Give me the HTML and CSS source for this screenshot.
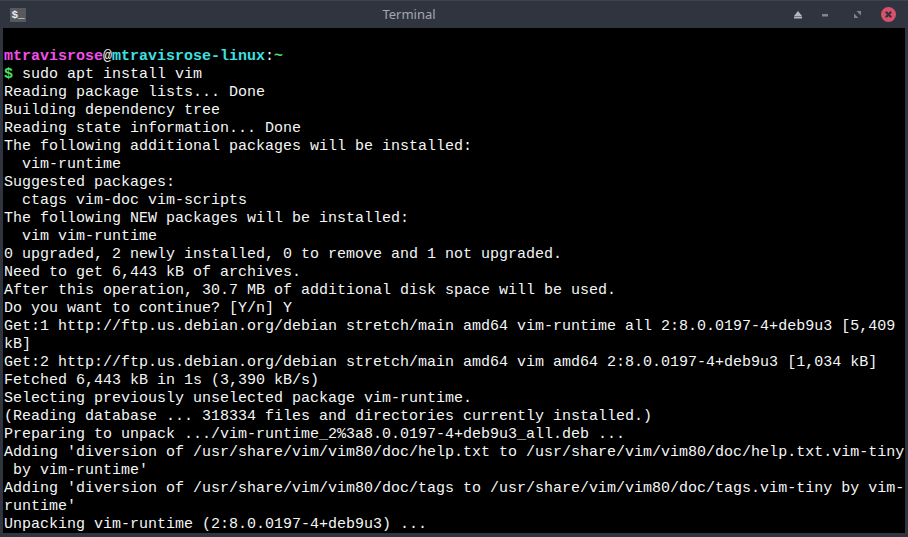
FILE: index.html
```html
<!DOCTYPE html>
<html lang="en">
<head>
<meta charset="utf-8">
<title>Terminal</title>
<link rel="stylesheet" href="styles.css">
</head>
<body>
<div class="window">
  <header class="titlebar">
    <div class="app-icon">$_</div>
    <div class="title">Terminal</div>
    <div class="controls">
      <svg class="ctl eject" width="8" height="8" viewBox="0 0 8 8"><path d="M4 0 8 5H0Z M0 5.500h8V7.500H0Z" fill="#b4b7bd"/></svg>
      <svg class="ctl minimize" width="6" height="3" viewBox="0 0 6 3"><path d="M0 0h6v2.500H0Z" fill="#80848e"/></svg>
      <svg class="ctl maximize" width="7" height="7" viewBox="0 0 7 7"><path d="M2.500 0H7V4.500Z M0 2.500V7H4.500Z" fill="#80848e"/></svg>
      <div class="close"><svg width="15" height="15" viewBox="0 0 15 15"><path d="M4.800 4.800l5.400 5.400M10.200 4.800l-5.400 5.400" stroke="#2f343f" stroke-width="2.200"/></svg></div>
    </div>
  </header>
  <pre class="term">

<span class="u">mtravisrose</span><span class="w">@</span><span class="h">mtravisrose-linux</span><span class="w">:</span><span class="g">~</span>
<span class="g">$</span> sudo apt install vim
Reading package lists... Done
Building dependency tree
Reading state information... Done
The following additional packages will be installed:
  vim-runtime
Suggested packages:
  ctags vim-doc vim-scripts
The following NEW packages will be installed:
  vim vim-runtime
0 upgraded, 2 newly installed, 0 to remove and 1 not upgraded.
Need to get 6,443 kB of archives.
After this operation, 30.7 MB of additional disk space will be used.
Do you want to continue? [Y/n] Y
Get:1 http://ftp.us.debian.org/debian stretch/main amd64 vim-runtime all 2:8.0.0197-4+deb9u3 [5,409
kB]
Get:2 http://ftp.us.debian.org/debian stretch/main amd64 vim amd64 2:8.0.0197-4+deb9u3 [1,034 kB]
Fetched 6,443 kB in 1s (3,390 kB/s)
Selecting previously unselected package vim-runtime.
(Reading database ... 318334 files and directories currently installed.)
Preparing to unpack .../vim-runtime_2%3a8.0.0197-4+deb9u3_all.deb ...
Adding 'diversion of /usr/share/vim/vim80/doc/help.txt to /usr/share/vim/vim80/doc/help.txt.vim-tiny
 by vim-runtime'
Adding 'diversion of /usr/share/vim/vim80/doc/tags to /usr/share/vim/vim80/doc/tags.vim-tiny by vim-
runtime'
Unpacking vim-runtime (2:8.0.0197-4+deb9u3) ...</pre>
</div>
</body>
</html>
```
FILE: styles.css
```css
* { box-sizing: border-box; }
html, body { margin: 0; height: 100%; background: #2f343f; overflow: hidden; }
.window {
  width: 908px;
  height: 537px;
  display: flex;
  flex-direction: column;
  background: #2f343f;
  padding: 0 3px 4px 3px;
}
.titlebar {
  height: 28px;
  flex: none;
  display: flex;
  align-items: center;
  margin: 0 -3px;
  padding: 0 12px 0 10px;
  border-top: 1px solid #3d424d;
}
.app-icon {
  width: 16px;
  height: 14px;
  background: #555a5f;
  color: #e8e8e8;
  font: bold 11px/14px "Liberation Mono", monospace;
  text-align: center;
}
.title {
  flex: 1;
  text-align: center;
  color: #a2a7b1;
  font: 13px "Noto Sans", sans-serif;
  margin-bottom: 2px;
  padding-right: 2px;
}
.controls { display: flex; align-items: center; }
.ctl { display: block; }
.eject { margin-right: 20px; }
.minimize { margin-right: 26px; margin-top: 1px; }
.maximize { margin-right: 20px; }
.close {
  width: 15px;
  height: 15px;
  border-radius: 50%;
  background: #d9516a;
}
.close svg { display: block; }
.term {
  flex: 1;
  margin: 0;
  background: #000;
  color: #f4f6f7;
  font: 15px/18px "Liberation Mono", monospace;
  padding: 2px 0 0 1px;
  overflow: hidden;
  white-space: pre;
}
.u { color: #f050e8; font-weight: bold; }
.h { color: #3fe0e0; font-weight: bold; }
.w { color: #f4f6f7; }
.g { color: #4fe060; font-weight: bold; }
```
